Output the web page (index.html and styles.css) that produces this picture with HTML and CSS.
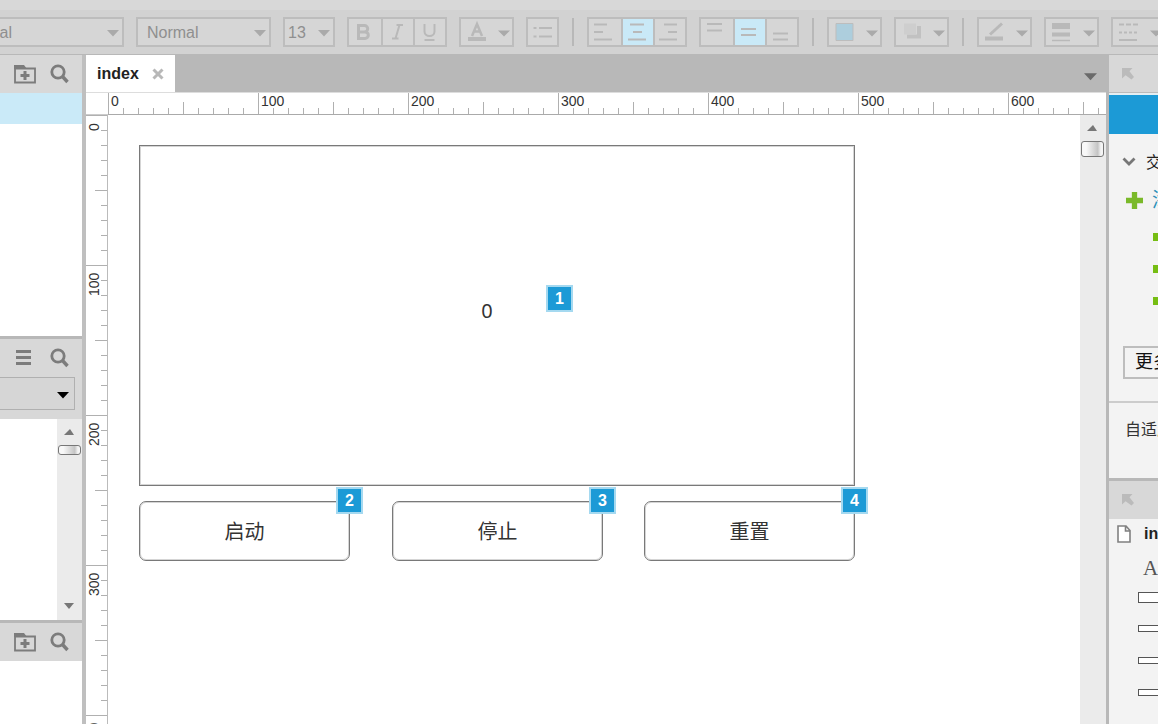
FILE: index.html
```html
<!DOCTYPE html>
<html lang="zh-CN">
<head>
<meta charset="utf-8">
<title>index</title>
<link rel="stylesheet" href="styles.css">
</head>
<body>
<svg class="defs" aria-hidden="true">
  <symbol id="caret" viewBox="0 0 12 7"><path d="M0 0h12L6 6.500z"/></symbol>
  <symbol id="folder" viewBox="0 0 22 20"><path d="M1 4.500h20V18.500H1z" fill="none" stroke="#7c7c7c" stroke-width="1.800"/><path d="M0 5V1h10l3 4z" fill="#7c7c7c"/><path d="M11 7v9M6.500 11.500h9" stroke="#7c7c7c" stroke-width="3"/></symbol>
  <symbol id="search" viewBox="0 0 20 20"><circle cx="8" cy="8" r="6.200" fill="none" stroke="#7c7c7c" stroke-width="2.800"/><path d="M12.500 12.500l5 5.500" stroke="#7c7c7c" stroke-width="3.400"/></symbol>
  <symbol id="dock" viewBox="0 0 12 12"><path d="M0 0h10.500L7.500 3.200 12 9 9.500 11.500 3.600 7.200 0 10.500z" fill="#bbb"/></symbol>
</svg>
<div class="menubar"></div>
<header class="toolbar">
  <label class="picker font"><select aria-label="Font"><option>Arial</option></select><svg><use href="#caret"/></svg></label>
  <label class="picker style"><select aria-label="Style"><option>Normal</option></select><svg><use href="#caret"/></svg></label>
  <label class="picker size"><select aria-label="Size"><option>13</option></select><svg><use href="#caret"/></svg></label>
  <div class="group">
    <button aria-label="Bold"><svg viewBox="0 0 32 28"><path d="M10.500 7.500h6a3.200 3.200 0 0 1 0 6.400h-6zM10.500 13.900h6.500a3.300 3.300 0 0 1 0 6.600h-6.500z"/></svg></button>
    <button aria-label="Italic"><svg class="thin" viewBox="0 0 32 28"><path d="M17.500 7L13.500 20.500M14.500 7h6.500M10 20.500h6.500"/></svg></button>
    <button aria-label="Underline"><svg class="thin" viewBox="0 0 32 28"><path d="M10.500 6v7.500a5 4.500 0 0 0 10 0V6M10.500 22h10"/></svg></button>
  </div>
  <button class="box wide" aria-label="Text color"><svg viewBox="0 0 53 28"><path d="M12 18l5-12 5 12M14 13.500h6.500" stroke-width="2.500"/><path d="M8 21h18" stroke-width="4"/><path class="tri" d="M38 12.500h12l-6 6z"/></svg></button>
  <button class="box list" aria-label="Bullets"><svg class="thin" viewBox="0 0 31 28"><path d="M12 10h13M12 18.500h13M6.500 10h3M6.500 18.500h3"/></svg></button>
  <i class="divider"></i>
  <div class="group">
    <button aria-label="Align left"><svg class="thin" viewBox="0 0 32 28"><path d="M6 6.500h13M6 14h9M6 21.500h18"/></svg></button>
    <button class="on" aria-label="Align center"><svg class="thin" viewBox="0 0 32 28"><path d="M8 6.500h14M11 14h9M6 21.500h18"/></svg></button>
    <button aria-label="Align right"><svg class="thin" viewBox="0 0 32 28"><path d="M10 6.500h13M14 14h9M5 21.500h18"/></svg></button>
  </div>
  <div class="group">
    <button aria-label="Align top"><svg class="thin" viewBox="0 0 32 28"><path d="M7 6h15M7 12.500h15"/></svg></button>
    <button class="on" aria-label="Align middle"><svg class="thin" viewBox="0 0 32 28"><path d="M7 11h15M7 17h15"/></svg></button>
    <button aria-label="Align bottom"><svg class="thin" viewBox="0 0 32 28"><path d="M7 15.500h15M7 21.500h15"/></svg></button>
  </div>
  <i class="divider"></i>
  <button class="box wide" aria-label="Fill"><svg viewBox="0 0 53 28"><path class="fill" d="M8 5.500h17v17H8z"/><path class="tri" d="M38 12.500h12l-6 6z"/></svg></button>
  <button class="box wide" aria-label="Shadow"><svg viewBox="0 0 53 28"><path class="soft" d="M12 18.500h12V8"/><path d="M9 5.500h12v11H9z" stroke="none" fill="#cecece"/><path class="tri" d="M38 12.500h12l-6 6z"/></svg></button>
  <i class="divider"></i>
  <button class="box wide" aria-label="Line color"><svg viewBox="0 0 53 28"><path d="M12 16.500L24 5.500"/><path d="M7 20.500h18" stroke-width="4"/><path class="tri" d="M38 12.500h12l-6 6z"/></svg></button>
  <button class="box wide" aria-label="Line width"><svg viewBox="0 0 53 28"><path d="M7 8h18" stroke-width="6"/><path d="M7 16.500h18" stroke-width="4"/><path d="M7 22.500h18" stroke-width="1.500"/><path class="tri" d="M38 12.500h12l-6 6z"/></svg></button>
  <button class="box wide" aria-label="Line style"><svg class="thin" viewBox="0 0 53 28"><path d="M7 6.500h19" stroke-dasharray="5 2"/><path d="M7 14.500h19" stroke-dasharray="3 2"/><path d="M7 22h18"/><path class="tri" d="M38 12.500h12l-6 6z"/></svg></button>
</header>
<div class="workspace">
  <aside class="left">
    <section class="pages">
      <div class="panel-head"><button aria-label="Add folder"><svg class="i22"><use href="#folder"/></svg></button><button aria-label="Search"><svg class="i20"><use href="#search"/></svg></button></div>
      <div class="selected"></div>
    </section>
    <section class="library">
      <div class="panel-head"><button aria-label="Menu"><svg class="i22" viewBox="0 0 22 20"><path d="M2 3.500h15M2 9.500h15M2 15.500h15" stroke="#7c7c7c" stroke-width="2.800"/></svg></button><button aria-label="Search"><svg class="i20"><use href="#search"/></svg></button></div>
      <div class="chooser"><label class="picker dark"><select aria-label="Library"><option></option></select><svg><use href="#caret"/></svg></label></div>
      <div class="list-area"><div class="scroll narrow"><svg class="arrow" viewBox="0 0 10 6"><path d="M0 6h10L6 0z"/></svg><div class="thumb"></div><svg class="arrow down" viewBox="0 0 10 6"><path d="M0 0h10L5 6z"/></svg></div></div>
    </section>
    <section class="masters">
      <div class="panel-head"><button aria-label="Add folder"><svg class="i22"><use href="#folder"/></svg></button><button aria-label="Search"><svg class="i20"><use href="#search"/></svg></button></div>
    </section>
  </aside>
  <main class="center">
    <nav class="tabs">
      <div class="tab">index<button aria-label="Close"><svg viewBox="0 0 12 12"><path d="M1.500 1.500l9 9M10.500 1.500l-9 9" stroke="#b8b8b8" stroke-width="3"/></svg></button></div>
      <button class="more-tabs" aria-label="Tabs"><svg><use href="#caret"/></svg></button>
    </nav>
    <div class="rule-row">
      <div class="corner"></div>
      <div class="ruler-x"><span>0</span><span>100</span><span>200</span><span>300</span><span>400</span><span>500</span><span>600</span></div>
    </div>
    <div class="stage">
      <div class="ruler-y"><span>0</span><span>100</span><span>200</span><span>300</span><span>400</span></div>
      <div class="canvas">
        <div class="shape display">0</div>
        <button class="shape key start">启动</button>
        <button class="shape key stop">停止</button>
        <button class="shape key reset">重置</button>
        <b class="note n1">1</b><b class="note n2">2</b><b class="note n3">3</b><b class="note n4">4</b>
      </div>
      <div class="scroll"><svg class="arrow" viewBox="0 0 10 6"><path d="M0 6h10L6 0z"/></svg><div class="thumb"></div></div>
    </div>
  </main>
  <aside class="right">
    <section class="inspector">
      <div class="panel-head"><svg class="i12"><use href="#dock"/></svg></div>
      <div class="banner"></div>
      <div class="row title"><svg class="chev" viewBox="0 0 14 9"><path d="M1.500 1.500L7 7l5.500-5.500" fill="none" stroke="#777" stroke-width="2.800"/></svg><span>交互</span></div>
      <div class="row add"><svg class="plus" viewBox="0 0 16 16"><path d="M8 0v16M0 8h16" stroke="#7ab929" stroke-width="5"/></svg><a href="#">添加用例</a></div>
      <div class="events"><i></i><i></i><i></i></div>
      <button class="more">更多事件</button>
      <div class="adaptive">自适应</div>
    </section>
    <section class="outline">
      <div class="panel-head"><svg class="i12"><use href="#dock"/></svg></div>
      <div class="row page"><svg viewBox="0 0 14 18"><path d="M1 1h8l4 4.500V17H1zM8.500 1v5H13" fill="#fff" stroke="#808080" stroke-width="1.600"/></svg><strong>index</strong></div>
      <div class="row glyph">A</div>
      <div class="row item first"><i></i></div>
      <div class="row item"><i></i></div>
      <div class="row item"><i></i></div>
      <div class="row item"><i></i></div>
    </section>
  </aside>
</div>
</body>
</html>
```
FILE: styles.css
```css
* { box-sizing: border-box; }
body {
  margin: 0;
  height: 100vh;
  display: flex;
  flex-direction: column;
  overflow: hidden;
  background: #fff;
  color: #333;
  font: 16px "Liberation Sans", Arial, "Noto Sans CJK SC", sans-serif;
}
button, select { font: inherit; color: inherit; margin: 0; padding: 0; border: 0; background: none; border-radius: 0; }
button svg { display: block; }
.defs { position: absolute; width: 0; height: 0; }

.menubar { flex: none; height: 10px; background: #d8d8d8; }
.toolbar {
  flex: none;
  height: 45px;
  display: flex;
  align-items: center;
  gap: 12px;
  background: #d2d2d2;
  border-bottom: 1px solid #b8b8b8;
}
.toolbar > * { flex: none; }
.picker { display: grid; align-items: center; height: 30px; border: 2px solid #bdbdbd; background: #d6d6d6; }
.picker select, .picker svg { grid-area: 1 / 1; }
.picker select { appearance: none; width: 100%; height: 100%; padding-left: 9px; color: #8f8f8f; }
.picker svg { justify-self: end; width: 12px; height: 7px; margin: 2px 3px 0 0; fill: #aaa; pointer-events: none; }
.font { width: 155px; margin-left: -31px; }
.style { width: 135px; }
.size { width: 52px; }
.size select { padding-left: 3px; }
.group { display: flex; border: 2px solid #bdbdbd; background: #d6d6d6; height: 30px; }
.group button { width: 32px; overflow: hidden; }
.group button + button { border-left: 2px solid #bdbdbd; }
.group .on { background: #c9e9f7; }
.toolbar button svg { width: 32px; height: 28px; margin: -1px; fill: none; stroke: #b9b9b9; stroke-width: 3; }
.box { height: 30px; border: 2px solid #bdbdbd; background: #d6d6d6; }
.toolbar .wide svg { width: 53px; }
.toolbar .list svg { width: 31px; }
.wide { width: 55px; }
.list { width: 33px; }
.toolbar button svg.thin { stroke-width: 2; }
.toolbar .tri { fill: #aaa; stroke: none; }
.toolbar .fill { fill: #adcedd; stroke: #bdbdbd; stroke-width: 1; }
.toolbar .soft { stroke: #c1c1c1; stroke-width: 4; }
.divider { width: 4px; height: 28px; border-left: 1px solid transparent; border-right: 1px solid transparent; background: #b8b8b8; background-clip: padding-box; }

.workspace { flex: 1; min-height: 0; display: flex; }
.panel-head { flex: none; height: 38px; display: flex; align-items: center; background: #d8d8d8; }
.left { flex: none; width: 86px; display: flex; flex-direction: column; border-right: 4px solid #bfbfbf; }
.left .panel-head { padding-left: 14px; gap: 14px; }
.i22 { width: 22px; height: 20px; }
.i20 { width: 20px; height: 20px; }
.i12 { width: 12px; height: 12px; }
.pages { height: 281px; }
.selected { height: 31px; background: #caeaf8; }
.library { height: 284px; display: flex; flex-direction: column; border-top: 3px solid #b8b8b8; }
.chooser { height: 42px; background: #d8d8d8; padding-right: 7px; }
.dark { height: 33px; border: 1px solid #b0b0b0; border-left: 0; }
.dark svg { fill: #000; margin: 4px 5px 0 0; }
.list-area { flex: 1; display: flex; justify-content: flex-end; }
.masters { border-top: 3px solid #b8b8b8; }

.scroll { width: 26px; display: flex; flex-direction: column; align-items: center; padding: 10px 2px 10px 0; background: #ebebeb; }
.scroll.narrow { width: 25px; padding: 10px 1px 11px 0; }
.arrow { width: 10px; height: 6px; fill: #777; }
.arrow.down { margin-top: auto; }
.thumb { width: 23px; height: 16px; margin-top: 10px; border: 1px solid #777; border-radius: 3px; background: linear-gradient(90deg, #f8f8f8 20%, #c4c4c4 75%, #f5f5f5 90%); }
.narrow .thumb { height: 10px; }

.center { flex: 1; min-width: 0; display: flex; flex-direction: column; }
.tabs { flex: none; height: 37px; display: flex; justify-content: space-between; background: #b8b8b8; }
.tab { display: flex; align-items: center; gap: 13px; padding: 0 11px; background: #fff; color: #222; font-weight: bold; }
.tab svg { width: 12px; height: 12px; }
.more-tabs { padding: 6px 9px 0 0; }
.more-tabs svg { width: 13px; height: 8px; fill: #6a6a6a; }
.rule-row { flex: none; height: 23px; display: flex; border-top: 1px solid #ddd; }
.corner { width: 22px; border-bottom: 1px solid #ccc; }
.ruler-x {
  flex: 1;
  display: flex;
  overflow: hidden;
  border-bottom: 1px solid #aaa;
  background:
    linear-gradient(90deg, #b0b0b0 1px, transparent 1px) 0 100% / 150px 22px repeat-x,
    linear-gradient(90deg, #b0b0b0 1px, transparent 1px) 0 100% / 75px 12px repeat-x,
    linear-gradient(90deg, #b0b0b0 1px, transparent 1px) 0 100% / 15px 6px repeat-x;
}
.ruler-x span { flex: none; width: 150px; padding-left: 3px; font-size: 14px; line-height: 16px; }
.stage { flex: 1; min-height: 0; display: flex; }
.ruler-y {
  flex: none;
  width: 22px;
  overflow: hidden;
  border-right: 1px solid #bbb;
  background:
    linear-gradient(#b0b0b0 1px, transparent 1px) 100% 0 / 22px 150px repeat-y,
    linear-gradient(#b0b0b0 1px, transparent 1px) 100% 0 / 12px 75px repeat-y,
    linear-gradient(#b0b0b0 1px, transparent 1px) 100% 0 / 6px 15px repeat-y;
}
.ruler-y span { display: block; height: 150px; width: 16px; padding-bottom: 8px; font-size: 14px; line-height: 16px; writing-mode: vertical-rl; transform: rotate(180deg); text-align: right; }
.canvas { flex: 1; position: relative; overflow: hidden; }
.shape { position: absolute; display: flex; align-items: center; justify-content: center; border: 1px solid #797979; outline: 1px solid #79797950; outline-offset: -2px; background: #fff; font: 20px "Noto Sans", "Noto Sans CJK SC", sans-serif; color: #333; }
.display { left: 31px; top: 30px; width: 716px; height: 341px; padding: 0 20px 10px 0; }
.key { top: 386px; width: 211px; height: 60px; padding-bottom: 2px; border-radius: 7px; }
.start { left: 31px; }
.stop { left: 284px; }
.reset { left: 536px; }
.note { position: absolute; width: 27px; height: 27px; display: grid; place-items: center; border: 2px solid #a5d9f0; background: #1c9ad6; color: #fff; }
.n1 { left: 438px; top: 170px; }
.n2 { left: 228px; top: 372px; }
.n3 { left: 481px; top: 372px; }
.n4 { left: 733px; top: 372px; }

.right { flex: none; width: 52px; display: flex; flex-direction: column; overflow: hidden; border-left: 3px solid #b8b8b8; background: #f3f3f3; white-space: nowrap; }
.right .panel-head { padding-left: 13px; }
.inspector { height: 423px; display: flex; flex-direction: column; align-items: flex-start; }
.inspector .panel-head, .banner { width: 100%; }
.inspector .panel-head { border-bottom: 1px solid #bbb; }
.banner { height: 41px; border-top: 2px solid #e5eef2; background: #1c9ad6; }
.row { display: flex; align-items: center; }
.row svg { flex: none; }
.title { height: 54px; padding-left: 13px; gap: 10px; color: #222; }
.chev { width: 14px; height: 9px; }
.add { height: 24px; padding-left: 17px; gap: 9px; font-size: 20px; line-height: 20px; }
.add a { color: #2a8fb8; text-decoration: none; }
.plus { width: 17px; height: 17px; }
.events { display: grid; gap: 24px; padding: 21px 0 0 44px; }
.events i { width: 16px; height: 8px; background: #76bd13; }
.more { width: 90px; height: 33px; margin: 41px 0 0 14px; padding: 0 0 2px 10px; border: 2px solid #bdbdbd; font-size: 18px; line-height: 24px; color: #111; text-align: left; }
.adaptive { width: 100%; margin-top: 22px; padding: 13px 0 0 16px; border-top: 2px solid #ccc; }
.outline { border-top: 3px solid #b8b8b8; }
.page { height: 30px; padding-left: 8px; gap: 13px; color: #222; }
.page svg { width: 14px; height: 18px; }
.glyph { height: 34px; padding: 4px 0 0 34px; font: 21px "Liberation Serif", serif; color: #555; }
.item { height: 32px; padding-left: 29px; }
.item i { flex: none; width: 30px; height: 7px; border: 1px solid #555; background: #fff; }
.first { height: 29px; }
.first i { height: 11px; }
```
